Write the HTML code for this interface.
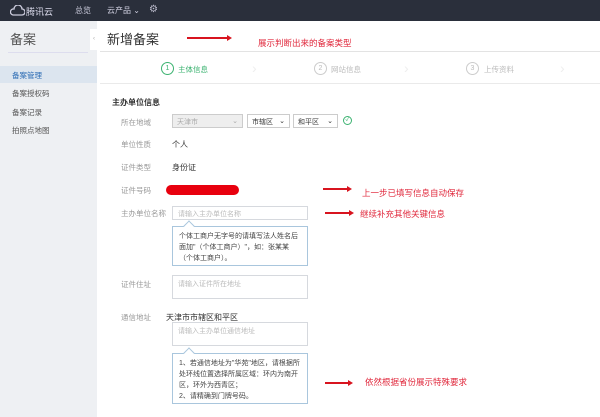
<!DOCTYPE html><html><head><meta charset="utf-8"><style>
*{margin:0;padding:0;box-sizing:border-box}
body{width:600px;height:417px;overflow:hidden;background:#fff;font-family:"Liberation Sans","Noto Sans CJK SC",sans-serif;position:relative;font-size:8px;color:#333}
.a{position:absolute;white-space:nowrap}
.top{left:0;top:0;width:600px;height:21px;background:#2a2f3b;color:#dde}
.side{left:0;top:21px;width:97px;height:396px;background:#eef0f3}
.lb{color:#999;font-size:7.5px}
.in{border:1px solid #d6d9de;background:#fff;color:#bbb;font-size:7px;padding:3px 5px}
.tip{border:1px solid #a9c6dd;background:#fff;color:#444;font-size:7px;line-height:11px;padding:4px 6px;white-space:normal}
.tip:before{content:"";position:absolute;left:12px;top:-5px;width:7px;height:7px;background:#fff;border-left:1px solid #a9c6dd;border-top:1px solid #a9c6dd;transform:rotate(45deg)}
.red{color:#e0283c;font-size:8.5px}
.arr{height:1.5px;background:#d8141f}
.arr:after{content:"";position:absolute;right:-3px;top:-2.5px;border-left:5px solid #d8141f;border-top:3px solid transparent;border-bottom:3px solid transparent}
.circ{width:13px;height:13px;border:1px solid #ccc;border-radius:50%;text-align:center;line-height:11px;font-size:7px;color:#bbb}
.sel{border:1px solid #ccc;font-size:7px;padding:2px 4px;height:14px;background:#fff}
</style></head><body>
<div class="a top"></div>
<svg class="a" style="left:10px;top:5px" width="15" height="11" viewBox="0 0 15 11"><path d="M3 10h9a3 3 0 0 0 0-6 4 4 0 0 0-8 0 3 3 0 0 0-1 6z" fill="none" stroke="#ccd" stroke-width="1.3"/></svg>
<div class="a" style="left:26px;top:5px;color:#dde;font-size:9px">腾讯云</div>
<div class="a" style="left:75px;top:5px;color:#ccd;font-size:8px">总览</div>
<div class="a" style="left:107px;top:5px;color:#ccd;font-size:8px">云产品 ⌄</div>
<div class="a" style="left:149px;top:4px;color:#bbc;font-size:10px">⚙</div>
<div class="a side"></div>
<div class="a" style="left:10px;top:29px;font-size:13px;color:#555">备案</div>
<div class="a" style="left:8px;top:52px;width:80px;height:1px;background:#dde"></div>
<div class="a" style="left:0;top:66px;width:97px;height:17px;background:#dce5ef"></div>
<div class="a" style="left:12px;top:70px;color:#2a6ab3;font-size:7.5px">备案管理</div>
<div class="a" style="left:12px;top:88px;color:#555;font-size:7.5px">备案授权码</div>
<div class="a" style="left:12px;top:107px;color:#555;font-size:7.5px">备案记录</div>
<div class="a" style="left:12px;top:125px;color:#555;font-size:7.5px">拍照点地图</div>
<div class="a" style="left:90px;top:29px;width:8px;height:21px;background:#fff;color:#aaa;font-size:6px;line-height:21px;text-align:center">‹</div>
<div class="a" style="left:107px;top:29px;font-size:13px;color:#333">新增备案</div>
<div class="a arr" style="left:187px;top:37px;width:42px"></div>
<div class="a red" style="left:258px;top:37px">展示判断出来的备案类型</div>
<div class="a" style="left:100px;top:51px;width:500px;height:1px;background:#e3e3e3"></div>
<div class="a circ" style="left:161px;top:62px;border-color:#3cb371;color:#3cb371">1</div>
<div class="a" style="left:178px;top:64px;color:#3cb371;font-size:7.5px">主体信息</div>
<div class="a" style="left:252px;top:60px;color:#eee;font-size:14px">›</div>
<div class="a circ" style="left:314px;top:62px">2</div>
<div class="a" style="left:331px;top:64px;color:#bbb;font-size:7.5px">网站信息</div>
<div class="a" style="left:404px;top:60px;color:#eee;font-size:14px">›</div>
<div class="a circ" style="left:466px;top:62px">3</div>
<div class="a" style="left:484px;top:64px;color:#bbb;font-size:7.5px">上传资料</div>
<div class="a" style="left:560px;top:60px;color:#eee;font-size:14px">›</div>
<div class="a" style="left:100px;top:83px;width:500px;height:1px;background:#eaeaea"></div>
<div class="a" style="left:112px;top:97px;font-weight:bold;font-size:8px;color:#333">主办单位信息</div>
<div class="a lb" style="left:121px;top:117px">所在地域</div>
<div class="a sel" style="left:172px;top:114px;width:71px;background:#eee;color:#aaa">天津市<span style="float:right">⌄</span></div>
<div class="a sel" style="left:247px;top:114px;width:43px">市辖区<span style="float:right">⌄</span></div>
<div class="a sel" style="left:293px;top:114px;width:45px">和平区<span style="float:right">⌄</span></div>
<div class="a" style="left:343px;top:116px;width:9px;height:9px;border:1px solid #3cb371;border-radius:50%;color:#3cb371;font-size:6px;line-height:7px;text-align:center">✓</div>
<div class="a lb" style="left:121px;top:139px">单位性质</div>
<div class="a" style="left:172px;top:139px;font-size:8px">个人</div>
<div class="a lb" style="left:121px;top:162px">证件类型</div>
<div class="a" style="left:172px;top:162px;font-size:8px">身份证</div>
<div class="a lb" style="left:121px;top:185px">证件号码</div>
<div class="a" style="left:166px;top:185px;width:73px;height:10px;background:#e8000e;border-radius:5px"></div>
<div class="a arr" style="left:323px;top:188px;width:26px"></div>
<div class="a red" style="left:362px;top:187px">上一步已填写信息自动保存</div>
<div class="a lb" style="left:121px;top:208px">主办单位名称</div>
<div class="a in" style="left:172px;top:206px;width:136px;height:14px;padding:2px 5px">请输入主办单位名称</div>
<div class="a arr" style="left:325px;top:212px;width:26px"></div>
<div class="a red" style="left:360px;top:208px">继续补充其他关键信息</div>
<div class="a tip" style="left:172px;top:226px;width:136px;height:40px">个体工商户无字号的请填写法人姓名后面加"（个体工商户）"，如：张某某（个体工商户）。</div>
<div class="a lb" style="left:121px;top:279px">证件住址</div>
<div class="a in" style="left:172px;top:275px;width:136px;height:24px">请输入证件所在地址</div>
<div class="a lb" style="left:121px;top:312px">通信地址</div>
<div class="a" style="left:166px;top:312px;font-size:8px">天津市市辖区和平区</div>
<div class="a in" style="left:172px;top:322px;width:136px;height:24px">请输入主办单位通信地址</div>
<div class="a tip" style="left:172px;top:353px;width:136px;height:51px">1、若通信地址为"华苑"地区，请根据所处环线位置选择所属区域：环内为南开区，环外为西青区；<br>2、请精确到门牌号码。</div>
<div class="a arr" style="left:325px;top:382px;width:25px"></div>
<div class="a red" style="left:365px;top:376px">依然根据省份展示特殊要求</div>
</body></html>
